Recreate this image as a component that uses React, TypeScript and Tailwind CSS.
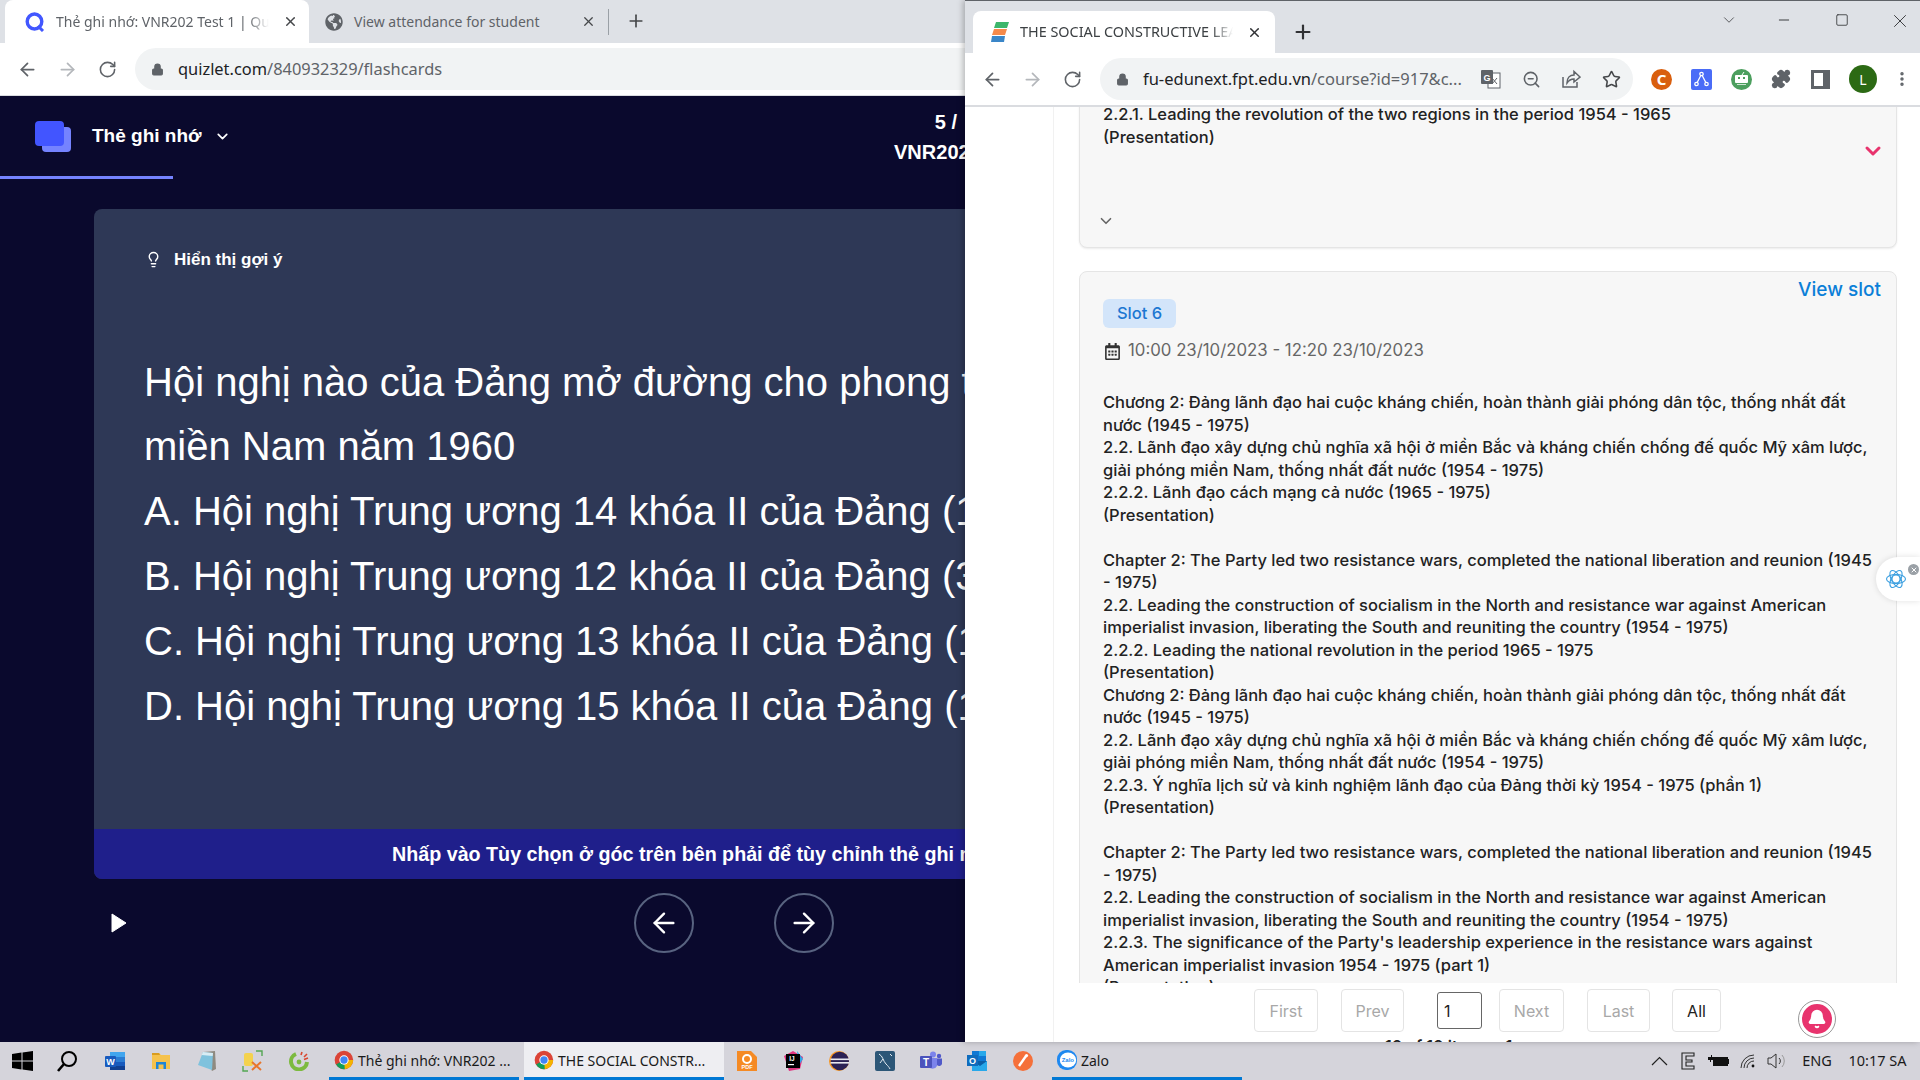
import { ArrowLeft, ArrowRight, ChevronDown, Lightbulb, Lock, Minus, Plus, RotateCw, Square, Star, X, ZoomOut, Puzzle, Bell, MoreVertical } from "lucide-react";
import { FaGlobeAmericas, FaRegCalendarAlt } from "react-icons/fa";

const uiFont = "font-['Noto_Sans','Open_Sans',sans-serif]";
const pageFont = "font-['Inter','Noto_Sans',sans-serif]";

const slotLines = [
  "Chương 2: Đảng lãnh đạo hai cuộc kháng chiến, hoàn thành giải phóng dân tộc, thống nhất đất",
  "nước (1945 - 1975)",
  "2.2. Lãnh đạo xây dựng chủ nghĩa xã hội ở miền Bắc và kháng chiến chống đế quốc Mỹ xâm lược,",
  "giải phóng miền Nam, thống nhất đất nước (1954 - 1975)",
  "2.2.2. Lãnh đạo cách mạng cả nước (1965 - 1975)",
  "(Presentation)",
  "",
  "Chapter 2: The Party led two resistance wars, completed the national liberation and reunion (1945",
  "- 1975)",
  "2.2. Leading the construction of socialism in the North and resistance war against American",
  "imperialist invasion, liberating the South and reuniting the country (1954 - 1975)",
  "2.2.2. Leading the national revolution in the period 1965 - 1975",
  "(Presentation)",
  "Chương 2: Đảng lãnh đạo hai cuộc kháng chiến, hoàn thành giải phóng dân tộc, thống nhất đất",
  "nước (1945 - 1975)",
  "2.2. Lãnh đạo xây dựng chủ nghĩa xã hội ở miền Bắc và kháng chiến chống đế quốc Mỹ xâm lược,",
  "giải phóng miền Nam, thống nhất đất nước (1954 - 1975)",
  "2.2.3. Ý nghĩa lịch sử và kinh nghiệm lãnh đạo của Đảng thời kỳ 1954 - 1975 (phần 1)",
  "(Presentation)",
  "",
  "Chapter 2: The Party led two resistance wars, completed the national liberation and reunion (1945",
  "- 1975)",
  "2.2. Leading the construction of socialism in the North and resistance war against American",
  "imperialist invasion, liberating the South and reuniting the country (1954 - 1975)",
  "2.2.3. The significance of the Party's leadership experience in the resistance wars against",
  "American imperialist invasion 1954 - 1975 (part 1)",
  "(Presentation)",
];

const questionLines = [
  "Hội nghị nào của Đảng mở đường cho phong trào Đồng khởi ở",
  "miền Nam năm 1960",
  "A. Hội nghị Trung ương 14 khóa II của Đảng (1/1959)",
  "B. Hội nghị Trung ương 12 khóa II của Đảng (3/1957)",
  "C. Hội nghị Trung ương 13 khóa II của Đảng (12/1957)",
  "D. Hội nghị Trung ương 15 khóa II của Đảng (1/1959)",
];

function ChromeIcon() {
  return (
    <svg width="20" height="20" viewBox="0 0 24 24">
      <circle cx="12" cy="12" r="11" fill="#db4437" />
      <path d="M12 12 L2.5 17.5 A11 11 0 0 1 2.5 6.5 Z" fill="#db4437" />
      <path d="M12 12 L2.5 17.5 A11 11 0 0 0 15 22.6 Z" fill="#0f9d58" />
      <path d="M12 12 L23 12 A11 11 0 0 1 13 23 Z" fill="#f4b400" />
      <circle cx="12" cy="12" r="5.6" fill="#fff" />
      <circle cx="12" cy="12" r="4.4" fill="#4285f4" />
    </svg>
  );
}

function WindowsLogo() {
  return (
    <svg width="21" height="20" viewBox="0 0 21 20" fill="#000">
      <path d="M0 3 L9.5 1.6 V9.5 H0 Z M10.5 1.4 L21 0 V9.5 H10.5 Z M0 10.5 H9.5 V18.4 L0 17 Z M10.5 10.5 H21 V20 L10.5 18.6 Z" />
    </svg>
  );
}

function SearchTask() {
  return (
    <svg width="22" height="22" viewBox="0 0 22 22" fill="none" stroke="#000" strokeWidth="2">
      <circle cx="13" cy="9" r="7" />
      <path d="M8 14 L2 21" strokeWidth="2.6" />
    </svg>
  );
}

function WordIcon() {
  return (
    <svg width="20" height="20" viewBox="0 0 20 20">
      <rect x="5" y="1" width="15" height="18" rx="1" fill="#2b7cd3" />
      <rect x="5" y="1" width="15" height="5" fill="#41a5ee" />
      <rect x="5" y="11" width="15" height="4" fill="#185abd" />
      <rect x="5" y="15" width="15" height="4" fill="#103f91" />
      <rect x="0" y="5" width="11" height="11" rx="1" fill="#185abd" />
      <text x="5.5" y="14" fontSize="9" fontWeight="700" fill="#fff" textAnchor="middle" fontFamily="Liberation Sans">W</text>
    </svg>
  );
}

function FolderIcon() {
  return (
    <svg width="20" height="20" viewBox="0 0 20 20">
      <path d="M1 2 H8 L10 4 H19 V18 H1 Z" fill="#f5c24d" />
      <path d="M1 2 H8 L9 4 H1 Z" fill="#d99c1f" />
      <path d="M5 18 V11 H15 V18 H12.5 V13.5 H7.5 V18 Z" fill="#1f86d6" />
    </svg>
  );
}

function NotepadIcon() {
  return (
    <svg width="20" height="22" viewBox="0 0 20 22">
      <path d="M6 2 L18 1 L19 19 L15 21 Z" fill="#8f8a80" />
      <path d="M6 2 L16 3 L15 20 L1 15 Z" fill="#7fc2dd" />
      <path d="M6 2 L16 3 L15.6 6 L4.6 5 Z" fill="#d8ecf4" />
    </svg>
  );
}

function XamppIcon() {
  return (
    <svg width="22" height="22" viewBox="0 0 22 22" fill="none">
      <rect x="2" y="3" width="9" height="13" rx="2" fill="#f4d24e" />
      <path d="M14 1 H20 V6 M1 16 V21 H6" stroke="#53a653" strokeWidth="1.4" />
      <path d="M10 12 L19 20 M19 12 L10 20" stroke="#e8762c" strokeWidth="2" />
    </svg>
  );
}

function CocCocIcon() {
  return (
    <svg width="20" height="20" viewBox="0 0 20 20" fill="none">
      <path d="M7 3 A8 8 0 1 0 18 11" stroke="#7cba3f" strokeWidth="4" />
      <circle cx="10" cy="11" r="2.4" fill="#7cba3f" />
      <path d="M12 4 L13 1 M15 6 L18 3 M15 8.5 L19 7" stroke="#d9462e" strokeWidth="1.6" />
    </svg>
  );
}

function FoxitIcon() {
  return (
    <svg width="20" height="20" viewBox="0 0 20 20">
      <path d="M0 0 H14 L20 6 V20 H0 Z" fill="#f58a24" />
      <circle cx="10" cy="8" r="4" fill="none" stroke="#fff" strokeWidth="2" />
      <text x="10" y="18" fontSize="5.5" fontWeight="700" fill="#fff" textAnchor="middle" fontFamily="Liberation Sans">PDF</text>
    </svg>
  );
}

function IntellijIcon() {
  return (
    <svg width="20" height="20" viewBox="0 0 20 20">
      <path d="M1 5 L10 0 L20 6 L17 18 L6 20 Z" fill="#e0357f" />
      <path d="M14 0 L20 8 L16 14 Z" fill="#2fa6e8" />
      <rect x="3" y="3" width="14" height="14" fill="#000" />
      <text x="9" y="10" fontSize="6.5" fontWeight="700" fill="#fff" textAnchor="middle" fontFamily="Liberation Sans">IJ</text>
      <rect x="5" y="13" width="6" height="1.2" fill="#fff" />
    </svg>
  );
}

function EclipseIcon() {
  return (
    <svg width="20" height="20" viewBox="0 0 20 20">
      <circle cx="10" cy="10" r="10" fill="#f7941e" />
      <circle cx="10.8" cy="10" r="9.2" fill="#2c2255" />
      <rect x="1.5" y="7.5" width="18.5" height="1.6" fill="#e8e8ef" />
      <rect x="1.5" y="11" width="18.5" height="1.6" fill="#e8e8ef" />
    </svg>
  );
}

function MysqlIcon() {
  return (
    <svg width="20" height="20" viewBox="0 0 20 20" fill="none">
      <rect width="20" height="20" rx="2" fill="#2c5677" />
      <path d="M4 3 C8 5 8 10 11 13 C13 15 14 16 15 18 M8 8 L5 12 M15 3 L17 5" stroke="#e5edf3" strokeWidth="1" />
    </svg>
  );
}

function TeamsIcon() {
  return (
    <svg width="22" height="20" viewBox="0 0 22 20">
      <circle cx="13" cy="3.5" r="3" fill="#7b83eb" />
      <circle cx="19" cy="5" r="2.2" fill="#5059c9" />
      <path d="M8 7 H17 V15 A5 5 0 0 1 8 15 Z" fill="#7b83eb" />
      <path d="M17 7.5 H22 V13 A3 3 0 0 1 17 14 Z" fill="#5059c9" />
      <rect x="0" y="5" width="12" height="12" rx="1" fill="#4b53bc" />
      <text x="6" y="14.5" fontSize="10" fontWeight="700" fill="#fff" textAnchor="middle" fontFamily="Liberation Sans">T</text>
    </svg>
  );
}

function OutlookIcon() {
  return (
    <svg width="20" height="20" viewBox="0 0 20 20">
      <rect x="5" y="0" width="14" height="10" fill="#0f78d4" />
      <rect x="12" y="0" width="7" height="5" fill="#28a8ea" />
      <path d="M5 10 H20 V20 H5 Z" fill="#0a5fa8" />
      <path d="M5 10 L13 15 L20 10 V20 H5 Z" fill="#28a8ea" />
      <rect x="0" y="4" width="11" height="11" fill="#0f6cbd" />
      <text x="5.5" y="13" fontSize="9" fontWeight="700" fill="#fff" textAnchor="middle" fontFamily="Liberation Sans">O</text>
    </svg>
  );
}

function PenIcon() {
  return (
    <svg width="20" height="20" viewBox="0 0 20 20" fill="none">
      <circle cx="10" cy="10" r="10" fill="#f5703a" />
      <path d="M6 15 L13 5" stroke="#fff" strokeWidth="2.4" />
      <circle cx="13.5" cy="4.6" r="1.6" fill="#fff" />
    </svg>
  );
}

function ZaloIcon() {
  return (
    <svg width="20" height="20" viewBox="0 0 20 20">
      <rect width="20" height="20" rx="9" fill="#1e88f0" />
      <ellipse cx="11" cy="10" rx="8.2" ry="7.6" fill="#fff" />
      <text x="10.8" y="12" fontSize="6" fontWeight="700" fill="#1e88f0" textAnchor="middle" fontFamily="Liberation Sans">Zalo</text>
    </svg>
  );
}

function TaskSlot({ children }: { children: React.ReactNode }) {
  return <div className="flex h-full w-[46px] shrink-0 items-center justify-center">{children}</div>;
}

function TaskApp({ label, active, icon, width }: { label: string; active?: boolean; icon: React.ReactNode; width: string }) {
  return (
    <div className={`flex h-full items-center gap-[4px] border-b-[3px] border-[#0078d4] ${width} ${active ? "bg-[#eeeef2]" : ""}`}>
      <div className="flex w-[21px] justify-center">{icon}</div>
      <span className="mt-[2px] whitespace-nowrap text-[14px] text-[#1a1a1a]">{label}</span>
    </div>
  );
}

function Taskbar() {
  return (
    <div className={`${uiFont} flex h-[38px] w-full items-stretch bg-[#d5d4db]`}>
      <div className="-ml-[1px] flex">
        <TaskSlot><WindowsLogo /></TaskSlot>
      </div>
      <div className="-ml-[1px] flex">
        <TaskSlot><SearchTask /></TaskSlot>
      </div>
      <div className="ml-[2px] flex">
        <TaskSlot><WordIcon /></TaskSlot>
      </div>
      <TaskSlot><FolderIcon /></TaskSlot>
      <TaskSlot><NotepadIcon /></TaskSlot>
      <TaskSlot><XamppIcon /></TaskSlot>
      <TaskSlot><CocCocIcon /></TaskSlot>
      <div className="ml-[7px] flex gap-[5px]">
        <TaskApp label="Thẻ ghi nhớ: VNR202 ..." icon={<ChromeIcon />} width="w-[190px] pl-[4px]" />
        <TaskApp label="THE SOCIAL CONSTR..." icon={<ChromeIcon />} width="w-[200px] pl-[9px]" active />
      </div>
      <TaskSlot><FoxitIcon /></TaskSlot>
      <TaskSlot><IntellijIcon /></TaskSlot>
      <TaskSlot><EclipseIcon /></TaskSlot>
      <TaskSlot><MysqlIcon /></TaskSlot>
      <TaskSlot><TeamsIcon /></TaskSlot>
      <TaskSlot><OutlookIcon /></TaskSlot>
      <TaskSlot><PenIcon /></TaskSlot>
      <div className="ml-[6px]">
        <TaskApp label="Zalo" icon={<ZaloIcon />} width="w-[190px] pl-[4px]" />
      </div>
      <div className="ml-auto flex w-[275px] items-center text-[#1a1a1a]">
        <div className="flex w-[28px] justify-center">
          <svg width="17" height="10" viewBox="0 0 17 10" fill="none" stroke="#222" strokeWidth="1.2"><path d="M1 9 L8.5 1.5 L16 9" /></svg>
        </div>
        <div className="flex w-[30px] justify-center">
          <svg width="14" height="18" viewBox="0 0 14 18" fill="none" stroke="#222" strokeWidth="1.1"><path d="M1 1 H13 V4 H5 V8 H11 V10 H5 V14 H13 V17 H1 Z" /></svg>
        </div>
        <div className="flex w-[30px] justify-center">
          <svg width="21" height="12" viewBox="0 0 21 12"><path d="M0 2 H3 V0 H4 V2 H5 V5 H3 V7 H2 V5 H0 Z" fill="#111" /><rect x="5" y="2" width="15" height="9" fill="#111" /><rect x="20" y="4" width="1" height="5" fill="#111" /></svg>
        </div>
        <div className="flex w-[30px] justify-center">
          <svg width="16" height="14" viewBox="0 0 16 14" fill="none" stroke="#333" strokeWidth="1"><path d="M1 14 A13 13 0 0 1 14 1 M4 14 A10 10 0 0 1 14 4 M7 14 A7 7 0 0 1 14 7" /><circle cx="13" cy="12" r="1.4" fill="#111" stroke="none" /></svg>
        </div>
        <div className="flex w-[28px] justify-center">
          <svg width="21" height="16" viewBox="0 0 21 16" fill="none" stroke="#333" strokeWidth="1"><path d="M1 5 H4 L9 1 V15 L4 11 H1 Z" /><path d="M12 5 A4 4 0 0 1 12 11" /><path d="M15 2 A9 9 0 0 1 15 14" stroke="#999" /></svg>
        </div>
        <div className="ml-[2px] w-[48px] text-center text-[14.5px]">ENG</div>
        <div className="w-[73px] text-center text-[14.5px]">10:17 SA</div>
      </div>
    </div>
  );
}

function QuizletWindow() {
  return (
    <div className="flex h-[1042px] w-[1920px] flex-col overflow-hidden bg-[#0a092d]">
      <div className={`${uiFont} flex h-[43px] items-end bg-[#dee1e6] pl-[5px]`}>
        <div className="flex h-[43px] w-[304px] items-center rounded-t-[8px] bg-white pl-[20px]">
          <svg width="20" height="20" viewBox="0 0 20 20" fill="none" stroke="#4257ff" strokeWidth="3.4"><ellipse cx="9.5" cy="9.5" rx="7.3" ry="7.5" /><path d="M13 14 L18 19" strokeWidth="3" /></svg>
          <span className="ml-[11px] w-[213px] overflow-hidden whitespace-nowrap text-[14px] text-[#5f6368] [mask-image:linear-gradient(to_right,black_90%,transparent)]">Thẻ ghi nhớ: VNR202 Test 1 | Quizlet</span>
          <X size={15} className="ml-[14px] text-[#45474a]" strokeWidth={2.4} />
        </div>
        <div className="flex h-[43px] w-[299px] items-center pl-[16px]">
          <FaGlobeAmericas size={18} className="text-[#5f6368]" />
          <span className="ml-[11px] w-[227px] whitespace-nowrap text-[14px] text-[#5f6368]">View attendance for student</span>
          <X size={15} className="text-[#45474a]" strokeWidth={2} />
        </div>
        <div className="mb-[8px] h-[26px] w-px bg-[#9aa0a6]" />
        <Plus size={20} className="mb-[12px] ml-[17px] text-[#45474a]" />
      </div>
      <div className={`${uiFont} flex h-[53px] items-center border-b border-[#dadce0] bg-white pl-[17px]`}>
        <ArrowLeft size={21} className="text-[#5f6368]" />
        <ArrowRight size={21} className="ml-[19px] text-[#b4b7bb]" />
        <RotateCw size={19} className="ml-[20px] text-[#5f6368]" />
        <div className="ml-[18px] flex h-[42px] w-[1400px] items-center rounded-full bg-[#f1f3f4] pl-[16px]">
          <Lock size={13} className="fill-[#5f6368] text-[#5f6368]" />
          <span className="ml-[14px] text-[16.4px] text-[#202124]">quizlet.com<span className="text-[#5f6368]">/840932329/flashcards</span></span>
        </div>
      </div>

      <div className="font-['Liberation_Sans',sans-serif] text-white">
        <div className="relative flex h-[83px] items-center pl-[35px]">
          <svg width="36" height="31" viewBox="0 0 36 31" className="-mt-[2px]">
            <rect x="7" y="6" width="29" height="25" rx="4" fill="#7583ff" />
            <rect x="0" y="0" width="29" height="25" rx="4" fill="#4255ff" />
          </svg>
          <span className="-mt-[2px] ml-[21px] text-[19px] font-bold">Thẻ ghi nhớ</span>
          <ChevronDown size={17} className="ml-[12px] -mt-[2px]" strokeWidth={2.4} />
          <div className="-mt-[2px] flex-1 pr-[231px] text-center text-[20px] font-bold leading-[30px]">
            <div className="pl-[16px]">5 / <span className="ml-[16px]">40</span></div>
            <div className="pl-[6px]">VNR202 Test 1</div>
          </div>
          <div className="absolute bottom-0 left-0 h-[3px] w-[173px] bg-[#7583ff]" />
        </div>

        <div className="mx-[94px] mt-[30px] flex h-[670px] flex-col overflow-hidden rounded-[8px] bg-[#2e3856]">
          <div className="flex-1 px-[50px] pt-[38px]">
            <div className="flex items-center">
              <Lightbulb size={17} className="ml-[1px]" />
              <span className="ml-[12px] text-[17px] font-bold">Hiển thị gợi ý</span>
            </div>
            <div className="mt-[77px] whitespace-nowrap text-[40px] leading-[64.9px]">
              {questionLines.map((line) => (
                <div key={line}>{line}</div>
              ))}
            </div>
          </div>
          <div className="flex h-[50px] items-center whitespace-nowrap bg-[#1f1f8b] pl-[298px] pt-[2px] text-[19.7px] font-bold">
            Nhấp vào Tùy chọn ở góc trên bên phải để tùy chỉnh thẻ ghi nhớ của bạn
          </div>
        </div>

        <div className="mt-[14px] flex items-center pl-[111px]">
          <svg width="16" height="20" viewBox="0 0 16 20" fill="#fff"><path d="M1 1 L15 10 L1 19 Z" strokeLinejoin="round" stroke="#fff" /></svg>
          <div className="ml-[507px] flex h-[60px] w-[60px] items-center justify-center rounded-full border-2 border-[#586380]">
            <ArrowLeft size={32} strokeWidth={1.8} />
          </div>
          <div className="ml-[80px] flex h-[60px] w-[60px] items-center justify-center rounded-full border-2 border-[#586380]">
            <ArrowRight size={32} strokeWidth={1.8} />
          </div>
        </div>
      </div>
    </div>
  );
}

function PageButton({ label, width, dark }: { label: string; width: string; dark?: boolean }) {
  return (
    <div className={`flex h-[43px] items-center justify-center rounded-[4px] border border-[#e4e4e4] text-[16px] ${width} ${dark ? "text-[#222]" : "text-[#a8a8a8]"}`}>
      {label}
    </div>
  );
}

function CourseWindow() {
  return (
    <div className="absolute left-[965px] top-0 flex h-[1042px] w-[955px] flex-col overflow-hidden border-t border-[#5f6368] bg-white shadow-[-2px_0_6px_rgba(0,0,0,0.25)]">
      <div className={`${uiFont} flex h-[52px] items-end bg-[#dee1e6] pl-[8px]`}>
        <div className="flex h-[42px] w-[302px] items-center rounded-t-[8px] bg-white pl-[18px]">
          <svg width="20" height="20" viewBox="0 0 20 20">
            <path d="M5 0 H18 L16 6 H3 Z" fill="#3cb66b" />
            <path d="M3 7 H16 L14 13 H1 Z" fill="#f58a4b" />
            <path d="M1 14 H14 L13 20 H0 Z" fill="#3a86c8" />
          </svg>
          <span className="ml-[9px] w-[213px] overflow-hidden whitespace-nowrap text-[14.4px] text-[#3c4043] [mask-image:linear-gradient(to_right,black_90%,transparent)]">THE SOCIAL CONSTRUCTIVE LEARNING</span>
          <X size={15} className="ml-[14px] text-[#303134]" strokeWidth={2.4} />
        </div>
        <Plus size={22} className="mb-[10px] ml-[17px] text-[#303134]" strokeWidth={2.4} />
        <div className="ml-auto flex h-full items-start pt-[10px] text-[#303134]">
          <ChevronDown size={18} strokeWidth={1} />
          <Minus size={16} className="ml-[38px] mt-[1px]" strokeWidth={1.4} />
          <Square size={14} className="ml-[43px] mt-[2px]" strokeWidth={1.4} />
          <X size={22} className="ml-[40px] mr-[9px] -mt-[1px]" strokeWidth={1} />
        </div>
      </div>
      <div className={`${uiFont} flex h-[54px] items-center border-b-2 border-[#dadce0] bg-white pl-[17px]`}>
        <ArrowLeft size={21} className="text-[#5f6368]" />
        <ArrowRight size={21} className="ml-[19px] text-[#b4b7bb]" />
        <RotateCw size={19} className="ml-[20px] text-[#5f6368]" />
        <div className="ml-[18px] flex h-[42px] w-[533px] items-center rounded-full bg-[#f1f3f4] pl-[16px]">
          <Lock size={13} className="fill-[#5f6368] text-[#5f6368]" />
          <span className="ml-[14px] mt-[1px] w-[328px] whitespace-nowrap text-[16.5px] text-[#202124]">fu-edunext.fpt.edu.vn<span className="text-[#5f6368]">/course?id=917&c...</span></span>
          <svg width="20" height="20" viewBox="0 0 20 20" className="ml-[10px]">
            <rect x="7" y="4" width="12" height="15" fill="#fff" stroke="#5f6368" />
            <path d="M11 9 L16 15 M16 9 L11 15" stroke="#5f6368" />
            <rect x="0" y="1" width="12" height="14" rx="1" fill="#5f6368" />
            <text x="6" y="12" fontSize="9" fontWeight="700" fill="#fff" textAnchor="middle" fontFamily="Liberation Sans">G</text>
          </svg>
          <ZoomOut size={19} className="ml-[21px] text-[#5f6368]" />
          <svg width="20" height="20" viewBox="0 0 20 20" fill="none" stroke="#5f6368" strokeWidth="1.5" className="ml-[20px]">
            <path d="M2 8 V18 H16 V13" />
            <path d="M6 14 C6 9 9 6 13 6 V2.5 L19 8 L13 13 V10 C10 10 8 11 6 14 Z" />
          </svg>
          <Star size={19} className="ml-[21px] text-[#45474a]" />
        </div>
        <div className="ml-[18px] flex h-[21px] w-[21px] items-center justify-center rounded-full bg-[#d95f0e] text-[15px] font-bold leading-none text-white">C</div>
        <div className="ml-[19px] flex h-[21px] w-[21px] items-center justify-center rounded-[2px] bg-[#4a6cf7]">
          <svg width="15" height="16" viewBox="0 0 15 16" fill="none" stroke="#fff" strokeWidth="1.3"><circle cx="7.5" cy="3" r="1.7" /><circle cx="2.5" cy="13" r="1.7" /><circle cx="12.5" cy="13" r="1.7" /><path d="M6.8 4.5 L3.2 11.5 M8.2 4.5 L11.8 11.5" /></svg>
        </div>
        <div className="ml-[19px] flex h-[21px] w-[21px] items-center justify-center rounded-full bg-[#4c9f5e]">
          <svg width="13" height="14" viewBox="0 0 13 14"><path d="M7 3 L9 0" stroke="#fff" /><rect y="3" width="13" height="8" rx="1" fill="#fff" /><rect x="3" y="5" width="2" height="2" fill="#4c9f5e" /><rect x="8" y="5" width="2" height="2" fill="#4c9f5e" /><rect x="2" y="12" width="9" height="1" fill="#cfe6d4" /></svg>
        </div>
        <Puzzle size={20} className="ml-[19px] fill-[#5f6368] text-[#5f6368]" />
        <div className="ml-[20px] flex h-[19px] w-[19px] justify-start border-[3px] border-[#5f6368] bg-white">
          <div className="ml-auto h-full w-[4px] bg-[#5f6368]" />
        </div>
        <div className="ml-[19px] flex h-[28px] w-[28px] items-center justify-center rounded-full bg-[#2c6a14] text-[14px] text-white">L</div>
        <MoreVertical size={18} className="ml-[16px] text-[#5f6368]" strokeWidth={2.6} />
      </div>

      <div className={`${pageFont} relative flex-1 overflow-hidden`}>
        <div className="flex h-full">
          <div className="w-[89px] shrink-0 border-r border-[#f1f1f1]" />
          <div className="ml-[25px] w-[818px] shrink-0">
            <div className="-mt-[5px] flex h-[146px] justify-between rounded-b-[8px] border border-[#e5e5e5] bg-[#f7f7f7] pl-[23px] pr-[11px] text-[16.5px] font-medium leading-[22.5px] text-[#222] shadow-[0_1px_2px_rgba(0,0,0,0.08)]">
              <div className="flex flex-col">
                <div className="whitespace-nowrap">2.2.1. Leading the revolution of the two regions in the period 1954 - 1965</div>
                <div>(Presentation)</div>
                <ChevronDown size={18} className="-ml-[6px] mt-[64px] text-[#666]" strokeWidth={2.2} />
              </div>
              <ChevronDown size={24} className="mt-[36px] text-[#e8336d]" strokeWidth={3} />
            </div>

            <div className="mt-[23px] rounded-t-[8px] border border-[#e5e5e5] bg-[#f7f7f7] pl-[23px]">
              <div className="flex justify-end pr-[15px] pt-[6px] text-[19px] font-medium leading-[24px] text-[#0b7fd8]">View slot</div>
              <div className="-mt-[3px] flex h-[29px] w-[73px] items-center justify-center rounded-[6px] bg-[#d3e5fa] text-[16.5px] font-medium text-[#1c77d2]">Slot 6</div>
              <div className="mt-[11px] flex h-[24px] items-center text-[16.8px] text-[#666]">
                <FaRegCalendarAlt size={17} className="ml-[1px] text-[#333]" />
                <span className="ml-[7px]">10:00 23/10/2023 - 12:20 23/10/2023</span>
              </div>
              <div className="mt-[28px] text-[16.5px] font-medium leading-[22.5px] text-[#222]">
                {slotLines.map((line, i) => (
                  <div key={i} className="h-[22.5px] whitespace-nowrap">{line}</div>
                ))}
              </div>
            </div>
          </div>
        </div>

        <div className="absolute bottom-0 left-[114px] flex h-[59px] w-[819px] items-start overflow-hidden bg-white pl-[175px] pt-[6px] text-[16px]">
          <PageButton label="First" width="w-[64px]" />
          <PageButton label="Prev" width="ml-[23px] w-[63px]" />
          <div className="ml-[33px] mt-[3px] flex h-[37px] w-[45px] items-center rounded-[3px] border border-[#666] pl-[6px] text-[#222]">1</div>
          <PageButton label="Next" width="ml-[17px] w-[65px]" />
          <PageButton label="Last" width="ml-[23px] w-[63px]" />
          <PageButton label="All" width="ml-[22px] w-[49px]" dark />
          <div className="ml-[78px] mt-[12px] flex h-[36px] w-[36px] items-center justify-center rounded-full border-[3px] border-white bg-[#e8336d] outline outline-1 outline-[#999]">
            <Bell size={20} className="fill-white text-white" />
          </div>
          <div className="absolute left-[306px] top-[51px] whitespace-nowrap text-[16px] font-semibold text-[#222]">10 of 10 items - 1</div>
        </div>

        <div className="absolute right-0 top-[450px] flex h-[44px] w-[44px] items-center justify-center rounded-l-full bg-white pr-[4px] shadow-[0_0_6px_rgba(0,0,0,0.12)]">
          <svg width="22" height="22" viewBox="0 0 22 22" fill="none" stroke="#3b9fe0" strokeWidth="1.1">
            <circle cx="11" cy="11" r="4" />
            <ellipse cx="11" cy="11" rx="9.5" ry="4.5" />
            <ellipse cx="11" cy="11" rx="9.5" ry="4.5" transform="rotate(60 11 11)" />
            <ellipse cx="11" cy="11" rx="9.5" ry="4.5" transform="rotate(120 11 11)" />
          </svg>
          <div className="absolute right-[1px] top-[7px] flex h-[11px] w-[11px] items-center justify-center rounded-full bg-[#9aa0a6]">
            <X size={8} className="text-white" strokeWidth={3} />
          </div>
        </div>
      </div>
    </div>
  );
}

export default function App() {
  return (
    <div className="relative h-[1080px] w-[1920px] overflow-hidden">
      <QuizletWindow />
      <CourseWindow />
      <Taskbar />
    </div>
  );
}
